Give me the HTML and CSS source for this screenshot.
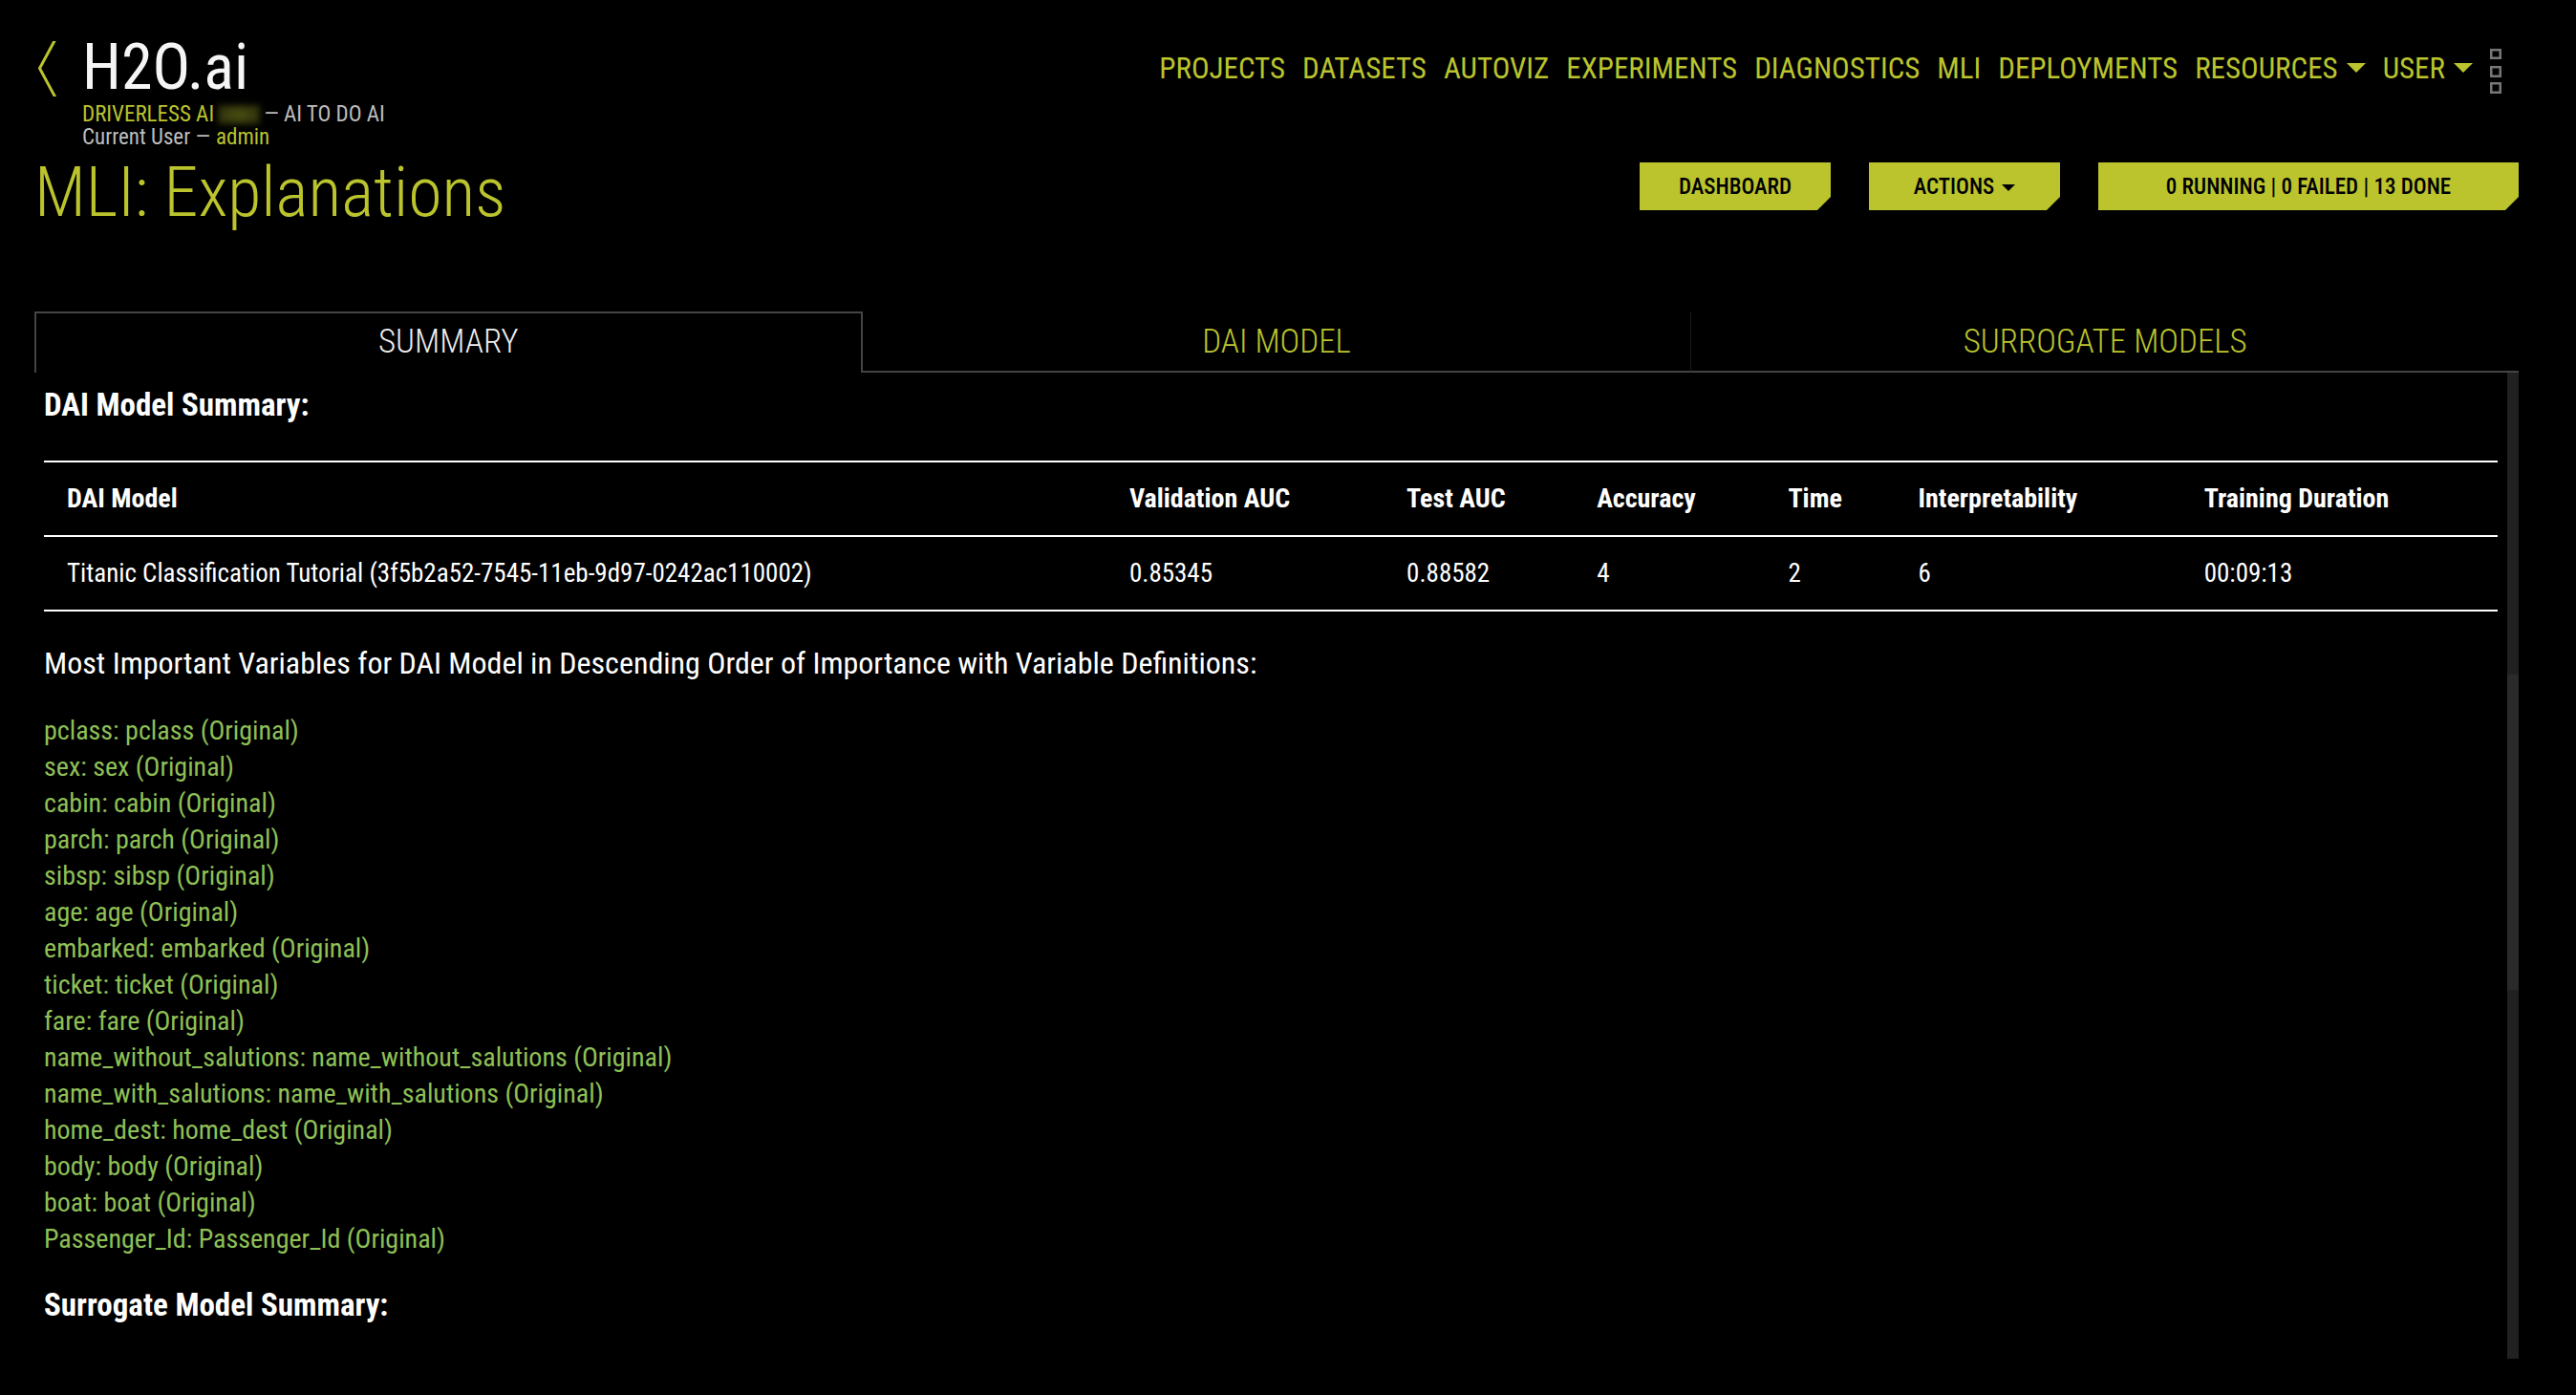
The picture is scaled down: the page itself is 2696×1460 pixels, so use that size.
FILE: index.html
```html
<!DOCTYPE html>
<html lang="en">
<head>
<meta charset="utf-8">
<meta name="viewport" content="width=device-width, initial-scale=1">
<title>MLI: Explanations</title>
<link rel="stylesheet" href="styles.css">
</head>
<body>
<header class="topbar">
  <a class="back" href="#" aria-label="Back">
    <svg class="back-icon" viewBox="0 0 20 58" aria-hidden="true"><path d="M19 -2L2.500 28.500L19 59" fill="none" stroke="currentColor" stroke-width="3"/></svg>
  </a>
  <div class="brand">
    <div class="logo">H2O.ai</div>
    <p class="brand-line"><a class="accent" href="#">DRIVERLESS AI</a><span class="version" aria-hidden="true"></span>— AI TO DO AI</p>
    <p class="brand-line">Current User — <span class="accent">admin</span></p>
  </div>
  <nav class="nav" aria-label="Main">
    <a href="#">PROJECTS</a>
    <a href="#">DATASETS</a>
    <a href="#">AUTOVIZ</a>
    <a href="#">EXPERIMENTS</a>
    <a href="#">DIAGNOSTICS</a>
    <a href="#">MLI</a>
    <a href="#">DEPLOYMENTS</a>
    <button class="nav-drop" type="button">RESOURCES<svg class="caret" viewBox="0 0 20 10" aria-hidden="true"><path d="M0 0H20L10 10Z" fill="currentColor"/></svg></button>
    <button class="nav-drop" type="button">USER<svg class="caret" viewBox="0 0 20 10" aria-hidden="true"><path d="M0 0H20L10 10Z" fill="currentColor"/></svg></button>
    <button class="more" type="button" aria-label="More"><svg class="more-icon" viewBox="0 0 12 48" aria-hidden="true"><g fill="none" stroke="currentColor" stroke-width="2.500"><path d="M1.250 1.250H10.750V9.750H1.250ZM1.250 19.250H10.750V28.750H1.250ZM1.250 36.250H10.750V45.750H1.250Z"/></g></svg></button>
  </nav>
</header>

<div class="titlebar">
  <h1 class="title">MLI: Explanations</h1>
  <div class="actions">
    <button class="btn" type="button">DASHBOARD</button>
    <button class="btn" type="button">ACTIONS<svg class="caret caret-small" viewBox="0 0 20 10" aria-hidden="true"><path d="M0 0H20L10 10Z" fill="currentColor"/></svg></button>
    <button class="btn btn-wide" type="button">0 RUNNING | 0 FAILED | 13 DONE</button>
  </div>
</div>

<main class="main">
  <div class="tabs" role="tablist">
    <button class="tab tab-active" type="button" role="tab" aria-selected="true">SUMMARY</button>
    <button class="tab" type="button" role="tab" aria-selected="false">DAI MODEL</button>
    <button class="tab tab-divided" type="button" role="tab" aria-selected="false">SURROGATE MODELS</button>
  </div>
  <div class="panel" role="tabpanel">
    <div class="content">
      <h2 class="heading">DAI Model Summary:</h2>
      <table class="table">
        <colgroup><col class="c-model"><col class="c-valid"><col class="c-test"><col class="c-acc"><col class="c-time"><col class="c-interp"><col></colgroup>
        <thead>
          <tr><th scope="col">DAI Model</th><th scope="col">Validation AUC</th><th scope="col">Test AUC</th><th scope="col">Accuracy</th><th scope="col">Time</th><th scope="col">Interpretability</th><th scope="col">Training Duration</th></tr>
        </thead>
        <tbody>
          <tr><td>Titanic Classification Tutorial (3f5b2a52-7545-11eb-9d97-0242ac110002)</td><td>0.85345</td><td>0.88582</td><td>4</td><td>2</td><td>6</td><td>00:09:13</td></tr>
        </tbody>
      </table>
      <p class="lead">Most Important Variables for DAI Model in Descending Order of Importance with Variable Definitions:</p>
      <ul class="vars">
        <li>pclass: pclass (Original)</li>
        <li>sex: sex (Original)</li>
        <li>cabin: cabin (Original)</li>
        <li>parch: parch (Original)</li>
        <li>sibsp: sibsp (Original)</li>
        <li>age: age (Original)</li>
        <li>embarked: embarked (Original)</li>
        <li>ticket: ticket (Original)</li>
        <li>fare: fare (Original)</li>
        <li>name_without_salutions: name_without_salutions (Original)</li>
        <li>name_with_salutions: name_with_salutions (Original)</li>
        <li>home_dest: home_dest (Original)</li>
        <li>body: body (Original)</li>
        <li>boat: boat (Original)</li>
        <li>Passenger_Id: Passenger_Id (Original)</li>
      </ul>
      <h2 class="heading">Surrogate Model Summary:</h2>
    </div>
    <div class="scrollbar" aria-hidden="true"><div class="thumb"></div></div>
  </div>
</main>
</body>
</html>
```

FILE: styles.css
```css
:root {
  --lime: #bbc42d;
  --green: #8fc056;
  --line: #444;
}

* { box-sizing: border-box; }

body {
  margin: 0;
  min-height: 100vh;
  padding: 34px 60px 38px 36px;
  display: flex;
  flex-direction: column;
  background: #000;
  color: #fff;
  font-family: "Roboto Condensed", Roboto, "Liberation Sans", sans-serif;
  font-size: 28px;
}

a { color: inherit; text-decoration: none; }

button {
  margin: 0;
  padding: 0;
  border: 0;
  background: none;
  color: inherit;
  font: inherit;
  cursor: pointer;
}

h1, h2, p, ul { margin: 0; padding: 0; }

.topbar { display: flex; align-items: flex-start; }

.back {
  display: flex;
  align-items: center;
  height: 76px;
  padding-left: 3px;
  color: var(--lime);
}
.back-icon { width: 20px; height: 58px; }

.brand { padding-left: 27px; }
.logo {
  font-size: 66px;
  font-weight: 400;
  line-height: 74px;
  color: #f5f5f5;
}
.brand-line {
  display: flex;
  align-items: center;
  gap: 6px;
  font-size: 23px;
  line-height: 24px;
  color: #bdbdbd;
}
.accent { color: var(--lime); }
.version {
  width: 44px;
  height: 20px;
  margin: 0 -2px;
  background: radial-gradient(ellipse at center, #4c5010, #24260a);
  filter: blur(3px);
}

.nav {
  flex: 1;
  display: flex;
  justify-content: flex-end;
  align-items: center;
  gap: 18px;
  height: 74px;
  padding-right: 18px;
  font-size: 31px;
  color: var(--lime);
}
.nav-drop { display: flex; align-items: center; gap: 9px; }
.caret { width: 20px; height: 10px; }
.caret-small { width: 14px; height: 7px; margin-left: 8px; vertical-align: middle; }
.more { display: flex; color: #777; padding-top: 8px; }
.more-icon { width: 12px; height: 48px; }

.titlebar {
  display: flex;
  justify-content: space-between;
  align-items: flex-start;
}
.title {
  padding-top: 6px;
  font-size: 72px;
  font-weight: 300;
  line-height: 80px;
  color: var(--lime);
}
.actions { display: flex; gap: 40px; padding-top: 14px; }
.btn {
  width: 200px;
  height: 50px;
  background: var(--lime);
  color: #000;
  font-size: 23px;
  font-weight: 500;
  clip-path: polygon(0 0, 100% 0, 100% calc(100% - 14px), calc(100% - 14px) 100%, 0 100%);
}
.btn-wide { width: 440px; }

.main {
  flex: 1;
  display: flex;
  flex-direction: column;
  margin-top: 84px;
}
.tabs { display: grid; grid-template-columns: repeat(3, 1fr); }
.tab {
  height: 64px;
  border-bottom: 2px solid var(--line);
  font-size: 35px;
  font-weight: 300;
  color: var(--lime);
}
.tab-active {
  padding-bottom: 4px;
  border: 2px solid var(--line);
  border-bottom: 0;
  color: #eee;
}
.tab-divided { border-left: 1px solid #1a1a1a; }

.panel { flex: 1; display: flex; }
.content { flex: 1; padding: 12px 10px 0; }
.heading { font-size: 33px; font-weight: 700; line-height: 44px; }

.table {
  width: 100%;
  margin-top: 36px;
  table-layout: fixed;
  border-spacing: 0;
  border-top: 2px solid #fff;
  line-height: 36px;
  text-align: left;
}
.table th, .table td {
  padding: 20px 24px;
  border-bottom: 2px solid #fff;
  white-space: nowrap;
}
.table td { font-size: 27px; }
.c-model { width: 43.3%; }
.c-valid { width: 11.3%; }
.c-test { width: 7.75%; }
.c-acc { width: 7.8%; }
.c-time { width: 5.3%; }
.c-interp { width: 11.65%; }

.lead { margin-top: 32px; font-size: 32px; line-height: 44px; }
.vars {
  margin: 30px 0 28px;
  list-style: none;
  line-height: 38px;
  color: var(--green);
}

.scrollbar {
  width: 12px;
  display: grid;
  grid-template-rows: 316fr 330fr 386fr;
  background: #212121;
}
.thumb { grid-row: 2; background: #2a2a2a; }
```
